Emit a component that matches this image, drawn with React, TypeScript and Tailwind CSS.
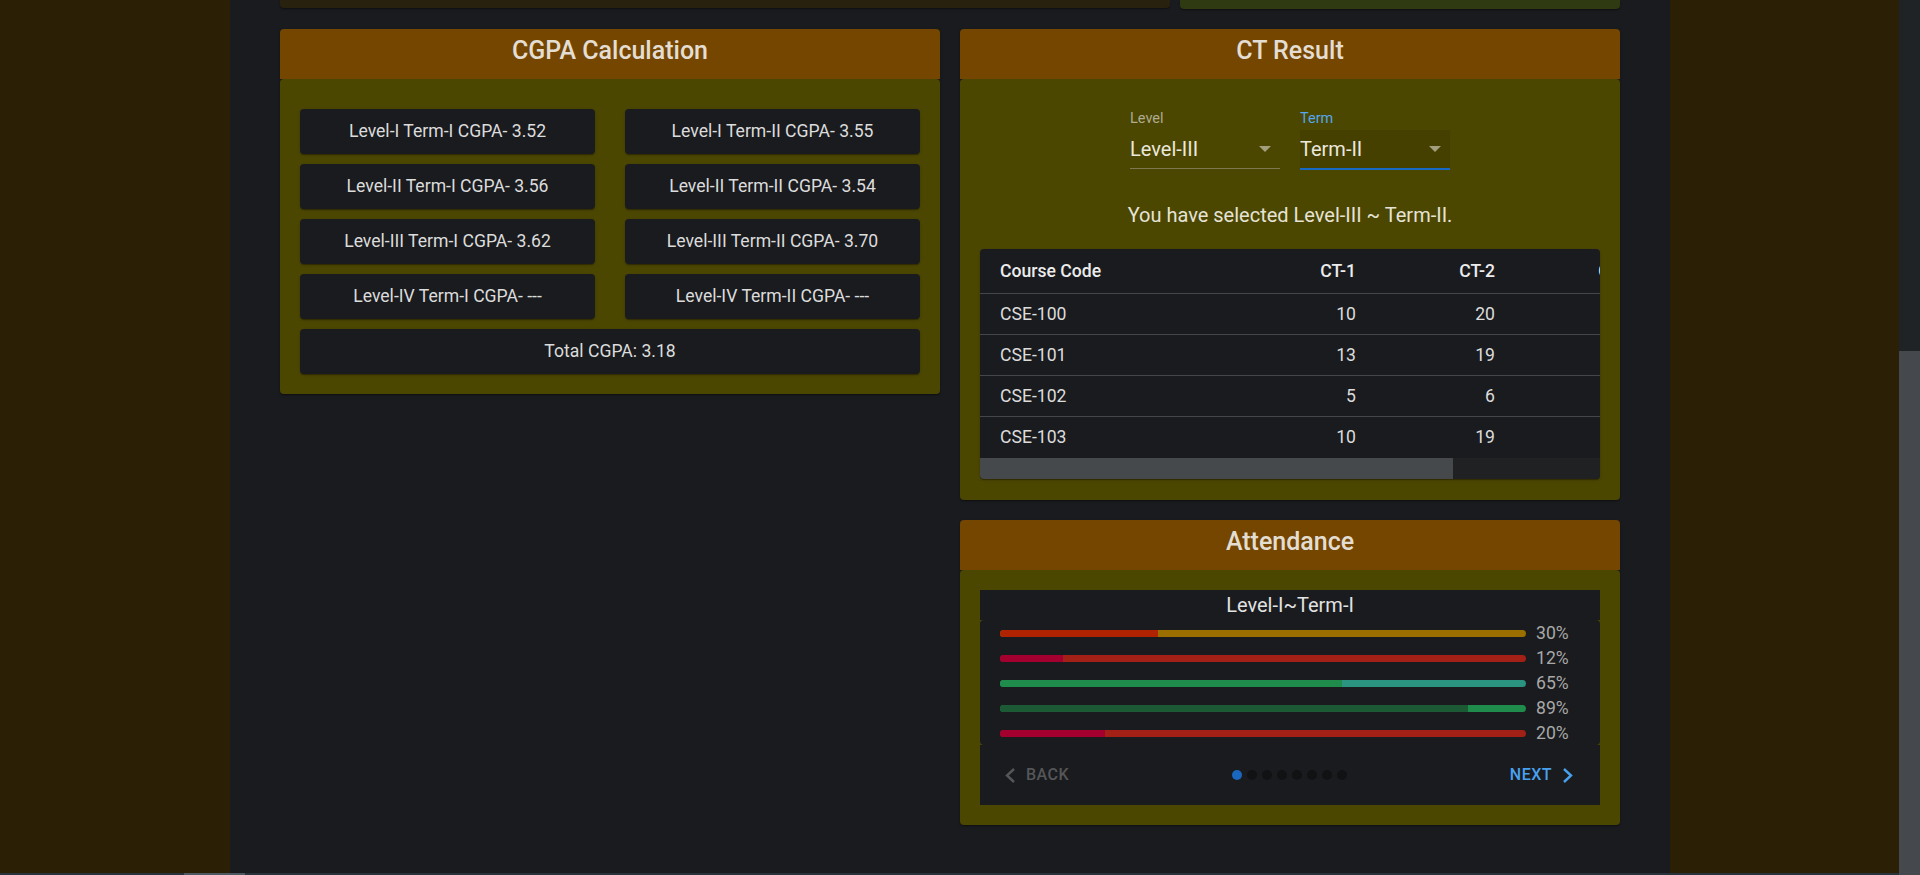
import React from "react";

const cgpa = [
  "Level-I Term-I CGPA- 3.52",
  "Level-I Term-II CGPA- 3.55",
  "Level-II Term-I CGPA- 3.56",
  "Level-II Term-II CGPA- 3.54",
  "Level-III Term-I CGPA- 3.62",
  "Level-III Term-II CGPA- 3.70",
  "Level-IV Term-I CGPA- ---",
  "Level-IV Term-II CGPA- ---",
];

const rows = [
  ["CSE-100", "10", "20", "15", "18"],
  ["CSE-101", "13", "19", "17", "16"],
  ["CSE-102", "5", "6", "8", "10"],
  ["CSE-103", "10", "19", "18", "20"],
];

const bars = [
  { p: 30, a: "#b02300", b: "#9a6f00" },
  { p: 12, a: "#a3002f", b: "#a32016" },
  { p: 65, a: "#1f8c4c", b: "#2a9480" },
  { p: 89, a: "#1b5a34", b: "#1f8c4c" },
  { p: 20, a: "#a3002f", b: "#a32016" },
];

const paperShadow =
  "shadow-[0_2px_1px_-1px_rgba(0,0,0,0.2),0_1px_1px_0_rgba(0,0,0,0.14),0_1px_3px_0_rgba(0,0,0,0.12)]";

function CardHeader({ title }: { title: string }) {
  return (
    <div className="h-[50px] bg-[#744600] pt-[4px] text-center text-[25px] leading-[36px] font-medium text-[#e4ddd2] rounded-t-[4px]">
      {title}
    </div>
  );
}

function Arrow() {
  return (
    <svg width="12" height="6" viewBox="0 0 12 6" className="shrink-0">
      <polygon points="0,0 12,0 6,6" fill="#a39f7e" />
    </svg>
  );
}

function Select({
  label,
  value,
  focused,
}: {
  label: string;
  value: string;
  focused?: boolean;
}) {
  return (
    <div className="w-[150px] flex flex-col">
      <div
        className={
          "h-[18px] text-[14.5px] leading-[18px] " +
          (focused ? "text-[#55a6ec]" : "text-[#b0ac91]")
        }
      >
        {label}
      </div>
      <div
        className={
          "mt-[2px] h-[38px] flex items-center justify-between pr-[9px] text-[20px] text-[#ebe8dc] " +
          (focused ? "bg-[#453f00]" : "")
        }
      >
        <span>{value}</span>
        <Arrow />
      </div>
      {focused ? (
        <div className="h-[2px] bg-[#1769c4]" />
      ) : (
        <div className="h-[1px] bg-[#7d784f]" />
      )}
    </div>
  );
}

function Chevron({ dir, color }: { dir: "l" | "r"; color: string }) {
  return (
    <svg width="10" height="15" viewBox="0 0 10 15" className="shrink-0">
      <polyline
        points={dir === "l" ? "9,1 2,7.5 9,14" : "1,1 8,7.5 1,14"}
        fill="none"
        stroke={color}
        strokeWidth="2.4"
      />
    </svg>
  );
}

const btn =
  "h-[45px] rounded-[4px] bg-[#1a1b1e] flex items-center justify-center text-[17.6px] text-[#dcdcdc] " +
  paperShadow;

export default function App() {
  return (
    <div className="w-[1920px] h-[875px] flex overflow-hidden font-['Roboto',sans-serif]">
      <div className="flex-1 flex flex-col min-w-0">
        <div className="flex-1 flex min-h-0">
          <div className="w-[230px] shrink-0 bg-[#2b1f05]" />
          <div className="w-[1440px] shrink-0 bg-[#1a1b1e] px-[50px]">
            {/* top cut-off cards */}
            <div className="flex items-start gap-[10px]">
              <div className={"w-[890px] h-[8px] bg-[#27210e] rounded-b-[4px] " + paperShadow} />
              <div className={"flex-1 h-[9px] bg-[#2f3a13] rounded-b-[4px] " + paperShadow} />
            </div>

            <div className="mt-[20px] flex items-start gap-[20px]">
              {/* CGPA card */}
              <div className={"w-[660px] rounded-[4px] " + paperShadow}>
                <CardHeader title="CGPA Calculation" />
                <div className="bg-[#4b4600] rounded-[4px] pt-[30px] px-[20px] pb-[20px]">
                  <div className="grid grid-cols-2 gap-x-[30px] gap-y-[10px]">
                    {cgpa.map((t) => (
                      <div key={t} className={btn}>
                        {t}
                      </div>
                    ))}
                    <div className={"col-span-2 " + btn}>Total CGPA: 3.18</div>
                  </div>
                </div>
              </div>

              {/* right column */}
              <div className="w-[660px] flex flex-col gap-[20px]">
                {/* CT Result */}
                <div className={"rounded-[4px] " + paperShadow}>
                  <CardHeader title="CT Result" />
                  <div className="bg-[#4b4600] rounded-[4px] pt-[31px] px-[20px] pb-[21px]">
                    <div className="flex justify-center items-start gap-[20px]">
                      <Select label="Level" value="Level-III" />
                      <Select label="Term" value="Term-II" focused />
                    </div>
                    <div className="mt-[31px] h-[28px] leading-[28px] text-center text-[20px] text-[#e6e3d6]">
                      You have selected Level-III ~ Term-II.
                    </div>
                    <div className={"mt-[20px] rounded-[4px] overflow-hidden bg-[#1a1b1e] " + paperShadow}>
                      <div className="w-[620px] overflow-hidden">
                        <div className="w-[813px]">
                          <div className="h-[45px] flex items-center border-b border-[#444649] text-[17.6px] font-medium text-[#ececec]">
                            <div className="w-[257px] shrink-0 pl-[20px]">Course Code</div>
                            <div className="w-[139px] shrink-0 pr-[20px] text-right">CT-1</div>
                            <div className="w-[139px] shrink-0 pr-[20px] text-right">CT-2</div>
                            <div className="w-[139px] shrink-0 pr-[20px] text-right">CT-3</div>
                            <div className="w-[139px] shrink-0 pr-[20px] text-right">CT-4</div>
                          </div>
                          {rows.map((r, i) => (
                            <div
                              key={r[0]}
                              className={
                                "h-[41px] flex items-center text-[17.6px] text-[#dcdcdc] " +
                                (i < rows.length - 1 ? "border-b border-[#444649]" : "")
                              }
                            >
                              <div className="w-[257px] shrink-0 pl-[20px]">{r[0]}</div>
                              <div className="w-[139px] shrink-0 pr-[20px] text-right">{r[1]}</div>
                              <div className="w-[139px] shrink-0 pr-[20px] text-right">{r[2]}</div>
                              <div className="w-[139px] shrink-0 pr-[20px] text-right">{r[3]}</div>
                              <div className="w-[139px] shrink-0 pr-[20px] text-right">{r[4]}</div>
                            </div>
                          ))}
                        </div>
                      </div>
                      <div className="h-[21px] bg-[#1f2123] flex">
                        <div className="w-[473px] bg-[#45494c]" />
                      </div>
                    </div>
                  </div>
                </div>

                {/* Attendance */}
                <div className={"rounded-[4px] " + paperShadow}>
                  <CardHeader title="Attendance" />
                  <div className="bg-[#4b4600] rounded-[4px] p-[20px]">
                    <div className="flex flex-col">
                      <div className="h-[30px] bg-[#1a1b1e] flex items-center justify-center text-[20px] text-[#e2e2e2]">
                        Level-I~Term-I
                      </div>
                      <div className="h-[125px] bg-[#1a1b1e] rounded-[4px] pt-[1px] flex flex-col">
                        {bars.map((b, i) => (
                          <div key={i} className="h-[25px] flex items-center pl-[20px]">
                            <div
                              className="w-[526px] h-[7px] rounded-full overflow-hidden"
                              style={{ background: b.b }}
                            >
                              <div
                                className="h-full"
                                style={{ width: b.p + "%", background: b.a }}
                              />
                            </div>
                            <div className="ml-[10px] text-[17.6px] text-[#a8a8a8]">{b.p}%</div>
                          </div>
                        ))}
                      </div>
                      <div className="h-[60px] bg-[#1a1b1e] flex items-center justify-between">
                        <div className="ml-[25px] flex items-center">
                          <Chevron dir="l" color="#555658" />
                          <span className="ml-[11px] text-[16px] font-medium tracking-[0.03em] text-[#555658]">
                            BACK
                          </span>
                        </div>
                        <div className="flex items-center gap-[5px]">
                          {Array.from({ length: 8 }).map((_, i) => (
                            <div
                              key={i}
                              className={
                                "w-[10px] h-[10px] rounded-full " +
                                (i === 0 ? "bg-[#1967bf]" : "bg-[#111214]")
                              }
                            />
                          ))}
                        </div>
                        <div className="mr-[27px] flex items-center">
                          <span className="text-[16px] font-medium tracking-[0.03em] text-[#48a1ef]">
                            NEXT
                          </span>
                          <span className="ml-[11px] flex">
                            <Chevron dir="r" color="#48a1ef" />
                          </span>
                        </div>
                      </div>
                    </div>
                  </div>
                </div>
              </div>
            </div>
          </div>
          <div className="flex-1 bg-[#2b1f05]" />
        </div>
        <div className="h-[2px] bg-[#28323a] flex">
          <div className="ml-[184px] w-[61px] bg-[#4d5960]" />
        </div>
      </div>
      <div className="w-[21px] bg-[#202326] flex flex-col">
        <div className="h-[351px]" />
        <div className="flex-1 bg-[#45494d]" />
      </div>
    </div>
  );
}
